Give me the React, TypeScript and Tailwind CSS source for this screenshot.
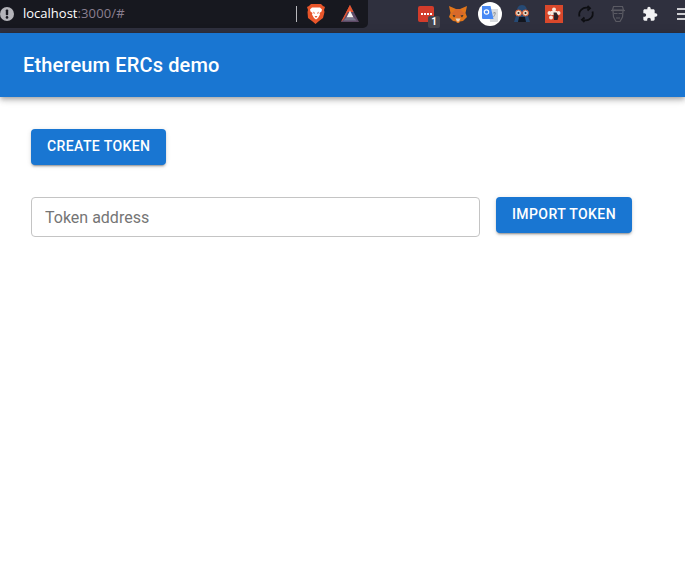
const buttonClass =
  'h-[36px] px-4 pb-[2px] rounded-[4px] bg-[#1976d2] text-white text-sm font-medium uppercase tracking-[0.4px] shadow-[0_3px_1px_-2px_rgba(0,0,0,0.2),0_2px_2px_0_rgba(0,0,0,0.14),0_1px_5px_0_rgba(0,0,0,0.12)]'

function WarnIcon() {
  return (
    <svg width="14" height="14" viewBox="0 0 14 14">
      <circle cx="7" cy="7" r="7" fill="#b4b4b9" />
      <rect x="5.8" y="2.5" width="2.4" height="5.8" rx="0.8" fill="#17181f" />
      <circle cx="7" cy="10.4" r="1.3" fill="#17181f" />
    </svg>
  )
}

function BraveIcon() {
  return (
    <svg width="18" height="20" viewBox="0 0 18 20">
      <path d="M4 0h10l2 2 2 1-1 3 .5 2-1.500 6-4 3-3.500 3-3.500-3-4-3L.500 8 1 6 0 3l2-1z" fill="#e8552a" />
      <path d="M5 3.500h8l2 2-.5 2-2 1.500.5 1.500-2 3.500-2 1.500-2-1.500-2-3.500.5-1.500-2-1.500-.5-2z" fill="#fff" />
      <path d="M6 7.500l2 1.500-1 1zM12 7.500l-2 1.500 1 1zM7.500 12h3L9 14z" fill="#e8552a" />
    </svg>
  )
}

function TriangleIcon() {
  return (
    <svg width="18" height="18" viewBox="0 0 18 18">
      <path d="M9 0l9 17H0z" fill="#5e4a66" />
      <path d="M9 0L0 17l3-3 6-11z" fill="#e8552e" />
      <path d="M9 0l-3.500 7h7z" fill="#e8552e" />
      <path d="M9 5.500l3.500 7h-7z" fill="#f6f3f0" />
      <path d="M5.500 12.500h7l3 3H2.500z" fill="#77768c" />
    </svg>
  )
}

function BadgeIcon() {
  return (
    <div className="relative w-4 h-4 rounded-[2px] bg-[#d23c2b] flex items-center justify-center gap-[1px]">
      <span className="w-[2px] h-[2px] bg-white" />
      <span className="w-[2px] h-[2px] bg-white" />
      <span className="w-[2px] h-[2px] bg-white" />
      <span className="w-[2px] h-[2px] bg-white" />
      <span className="absolute left-[10px] top-[10px] w-[12px] h-[12px] rounded-[2px] bg-[#46464e] text-white text-[10px] font-bold leading-none flex items-center justify-center">
        1
      </span>
    </div>
  )
}

function FoxIcon() {
  return (
    <svg width="20" height="17" viewBox="0 0 20 17">
      <path d="M1 0l7 3h4l7-3-1.500 7L19 11l-4 4-3 .5-1 1.500H9l-1-1.500L5 15l-4-4 1.500-4z" fill="#e2761b" />
      <path d="M3 8l5-5h4l5 5-3 1-3 3H9L6 9z" fill="#d8692a" />
      <path d="M4.500 9l3 .5-1.500 2zM15.500 9l-3 .5 1.500 2z" fill="#33302f" />
      <path d="M7.500 12.500h5L11 15.500H9z" fill="#e8d2bf" />
    </svg>
  )
}

function TranslateIcon() {
  return (
    <div className="w-6 h-6 rounded-full bg-white flex items-center justify-center">
      <svg width="18" height="18" viewBox="0 0 18 18">
        <path d="M8 4h9v12a1 1 0 0 1-1 1H9z" fill="#d9dce0" />
        <path d="M12 8h3M13.500 7v1M12.500 12l2-3.500" stroke="#8b8f95" strokeWidth="0.8" fill="none" />
        <path d="M1 1h8.500l3 13H2a1 1 0 0 1-1-1z" fill="#4a8af4" />
        <circle cx="5.500" cy="7" r="2.200" fill="none" stroke="#fff" strokeWidth="1.200" />
      </svg>
    </div>
  )
}

function SpyIcon() {
  return (
    <svg width="18" height="18" viewBox="0 0 18 18">
      <path d="M9 0c3.500 0 5 3 5 6l1 5 2 6H1l2-6 1-5c0-3 1.500-6 5-6z" fill="#264a75" />
      <path d="M6 12h6l1 5H5z" fill="#12161f" />
      <circle cx="5.500" cy="8" r="3" fill="#ecd9c6" stroke="#d9572b" />
      <circle cx="12.500" cy="8" r="3" fill="#ecd9c6" stroke="#d9572b" />
      <circle cx="5.500" cy="8" r="1" fill="#222" />
      <circle cx="12.500" cy="8" r="1" fill="#222" />
    </svg>
  )
}

function RedSquareIcon() {
  return (
    <svg width="18" height="18" viewBox="0 0 18 18">
      <rect width="18" height="18" fill="#d9482b" />
      <circle cx="9" cy="4.500" r="2" fill="#f6e7dc" />
      <circle cx="4.500" cy="8" r="2" fill="#f6e7dc" />
      <circle cx="13.500" cy="8" r="2" fill="#f6e7dc" />
      <circle cx="6" cy="12.500" r="2" fill="#f6e7dc" />
      <path d="M6 6h6v4H6z" fill="#f6e7dc" />
      <path d="M8.500 7.500h3l2 4-1 3.500H9z" fill="#2b2226" />
    </svg>
  )
}

function SyncIcon() {
  return (
    <svg width="18" height="18" viewBox="0 0 18 18" fill="none" stroke="#0e0f13" strokeWidth="1.800">
      <path d="M2.500 11.500a7 7 0 0 1 9-8.500" />
      <path d="M15.500 6.500a7 7 0 0 1-9 8.500" />
      <path d="M10.500 1l2.500 2.200-2.500 2.300M7.500 12.500L5 14.800l2.500 2.200" />
    </svg>
  )
}

function MaskIcon() {
  return (
    <svg width="16" height="18" viewBox="0 0 16 18" fill="none" stroke="#5a5a63" strokeWidth="1.200">
      <path d="M3.500 1.500h9l1 3.500h-11z" />
      <path d="M1 5.500h14" />
      <path d="M3 6l.5 6L6 16.500h4l2.500-4.500.5-6" />
      <path d="M4 8.500h3.500M8.500 8.500H12M6 13h4" />
    </svg>
  )
}

function PuzzleIcon() {
  return (
    <svg width="16" height="16" viewBox="0 0 24 24" fill="#f2f2f4">
      <path d="M20.500 11H19V7c0-1.100-.9-2-2-2h-4V3.500C13 2.120 11.880 1 10.500 1S8 2.120 8 3.500V5H4c-1.100 0-1.990.9-1.990 2v3.800H3.500c1.490 0 2.700 1.210 2.700 2.700s-1.210 2.700-2.700 2.700H2V20c0 1.100.9 2 2 2h3.800v-1.500c0-1.490 1.210-2.700 2.700-2.700 1.490 0 2.700 1.210 2.700 2.700V22H17c1.100 0 2-.9 2-2v-4h1.500c1.380 0 2.500-1.120 2.500-2.500S21.880 11 20.500 11z" />
    </svg>
  )
}

function ToolbarIcons() {
  const icons = [
    <BadgeIcon />,
    <FoxIcon />,
    <TranslateIcon />,
    <SpyIcon />,
    <RedSquareIcon />,
    <SyncIcon />,
    <MaskIcon />,
    <PuzzleIcon />,
  ]
  return (
    <div className="h-7 ml-[42px] flex shrink-0">
      {icons.map((icon, i) => (
        <div key={i} className="w-8 flex items-center justify-center">
          {icon}
        </div>
      ))}
      <div className="w-8 flex flex-col justify-center items-center gap-[3px]">
        <div className="w-[10px] h-[2px] bg-[#cfcfd3]" />
        <div className="w-[10px] h-[2px] bg-[#cfcfd3]" />
        <div className="w-[10px] h-[2px] bg-[#cfcfd3]" />
      </div>
    </div>
  )
}

export default function App() {
  return (
    <div className="w-[685px] h-[568px] overflow-hidden bg-white flex flex-col font-['Roboto',sans-serif]">
      <div className="h-[33px] bg-[#2f303e] flex items-start shrink-0 overflow-hidden">
        <div className="w-[368px] h-[28px] bg-[#17181f] rounded-br-[5px] flex items-center shrink-0">
          <WarnIcon />
          <span className="ml-[9px] text-[13px] text-white font-['Open_Sans',sans-serif]">
            localhost<span className="text-[#8a7f90] tracking-[0.15px]">:3000/#</span>
          </span>
          <div className="ml-auto w-px h-[16px] bg-[#b8b8bc]" />
          <div className="ml-[10px] flex">
            <BraveIcon />
          </div>
          <div className="ml-[16px] mr-[9px] flex">
            <TriangleIcon />
          </div>
        </div>
        <ToolbarIcons />
      </div>

      <header className="h-16 bg-[#1976d2] flex items-center px-[23px] shrink-0 shadow-[0_2px_4px_-1px_rgba(0,0,0,0.2),0_4px_5px_0_rgba(0,0,0,0.14),0_1px_10px_0_rgba(0,0,0,0.12)]">
        <h1 className="text-xl font-medium text-white tracking-[0.15px]">Ethereum ERCs demo</h1>
      </header>

      <main className="pt-8 pl-[31px] flex flex-col gap-8 items-start">
        <button className={buttonClass}>Create token</button>
        <div className="flex items-start gap-4">
          <input
            placeholder="Token address"
            className="w-[449px] h-10 px-[13px] text-base border border-[#c4c4c4] rounded-[4px] placeholder:text-[#757575] outline-none"
          />
          <button className={buttonClass}>Import token</button>
        </div>
      </main>
    </div>
  )
}
